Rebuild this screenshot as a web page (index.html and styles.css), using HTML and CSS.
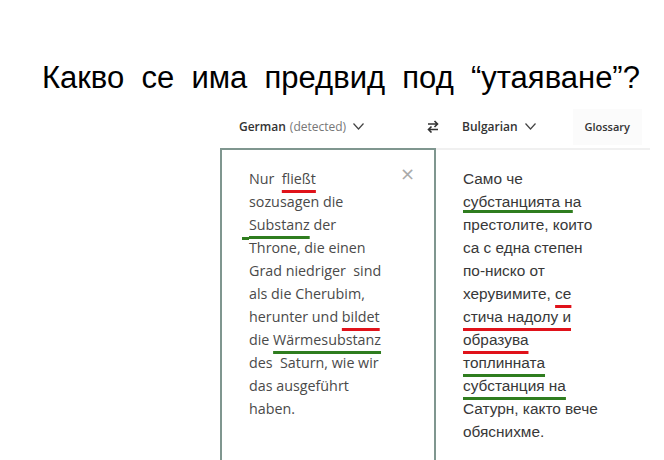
FILE: index.html
```html
<!DOCTYPE html>
<html lang="bg">
<head>
  <meta charset="UTF-8">
  <title>Утаяване</title>
  <link rel="stylesheet" href="styles.css">
</head>
<body>
<h1 class="title">Какво&nbsp; се&nbsp; има&nbsp; предвид&nbsp; под&nbsp; “утаяване”?</h1>

<div class="translator">
  <div class="toolbar">
    <div class="lang lang-from">
      <span class="lang-name">German</span> <span class="lang-note">(detected)</span>
      <svg class="chev" width="11" height="7" viewBox="0 0 11 7"><path d="M0.5 0.5 L5.5 6 L10.5 0.5" fill="none" stroke="#444" stroke-width="1.2"/></svg>
    </div>
    <svg class="swap" width="12" height="13" viewBox="0 0 12 13">
      <path d="M1 4 H10.5 M7.5 1 L10.5 4 L7.5 7" fill="none" stroke="#333" stroke-width="1.6"/>
      <path d="M11 9.5 H1.5 M4.5 6.5 L1.5 9.5 L4.5 12.5" fill="none" stroke="#333" stroke-width="1.6"/>
    </svg>
    <div class="lang lang-to">
      <span class="lang-name">Bulgarian</span>
      <svg class="chev" width="11" height="7" viewBox="0 0 11 7"><path d="M0.5 0.5 L5.5 6 L10.5 0.5" fill="none" stroke="#444" stroke-width="1.2"/></svg>
    </div>
    <button class="glossary">Glossary</button>
  </div>

  <div class="panels">
    <div class="panel panel-source">
      <p class="text-de">Nur&nbsp; <span class="mark red">fließt</span><br>
        sozusagen die<br>
        <span class="mark green m-left">Substanz</span> der<br>
        Throne, die einen<br>
        Grad niedriger&nbsp; sind<br>
        als die Cherubim,<br>
        herunter und <span class="mark red">bildet</span><br>
        die <span class="mark green">Wärmesubstanz</span><br>
        des&nbsp; Saturn, wie wir<br>
        das ausgeführt<br>
        haben.</p>
      <span class="close">×</span>
    </div>
    <div class="panel panel-target">
      <p class="text-bg">Само че<br>
        <span class="mark green m-up">субстанцията н</span>а<br>
        престолите, които<br>
        са с една степен<br>
        по-ниско от<br>
        херувимите, <span class="mark red">се</span><br>
        <span class="mark red">стича надолу и</span><br>
        <span class="mark red">образува</span><br>
        <span class="mark green">топлинната</span><br>
        <span class="mark green">субстанция на</span><br>
        Сатурн, както вече<br>
        обяснихме.</p>
    </div>
  </div>
</div>
</body>
</html>
```

FILE: styles.css
```css
body {
  margin: 0;
  background: #fff;
  font-family: "Liberation Sans", Arial, sans-serif;
  height: 460px;
  overflow: hidden;
}

.title {
  margin: 0;
  padding: 61px 0 0 42px;
  font-size: 31px;
  line-height: 34px;
  font-weight: normal;
  color: #000;
  white-space: nowrap;
}

.translator {
  margin-left: 220px;
  width: 430px;
  margin-top: 10px;
}

.toolbar {
  display: flex;
  align-items: center;
  height: 43px;
  font-family: "Open Sans", "Noto Sans", sans-serif;
  font-size: 12px;
  color: #333;
}

.lang {
  display: flex;
  align-items: center;
  gap: 4px;
}

.lang-from {
  padding-left: 19px;
  width: 188px;
}

.lang-name {
  font-weight: 600;
  color: #333;
}

.lang-note {
  color: #777;
}

.chev {
  margin-left: 3px;
}

.swap {
  margin-right: 23px;
}

.glossary {
  margin-left: auto;
  margin-right: 8px;
  height: 36px;
  padding: 0 12px;
  border: none;
  background: #fbfbfb;
  font-family: "Open Sans", "Noto Sans", sans-serif;
  font-size: 11px;
  font-weight: 600;
  color: #333;
}

.panels {
  display: grid;
  grid-template-columns: 216px 1fr;
  height: 320px;
}

.panel {
  position: relative;
}

.panel-source {
  border: 2px solid #7f968f;
  border-bottom: none;
}

.panel-target {
  border-top: 2px solid #f0f0f0;
}

.text-de, .text-bg {
  margin: 0;
  line-height: 23px;
}

.text-de {
  padding: 17px 0 0 27px;
  font-family: "Open Sans", "Noto Sans", sans-serif;
  font-size: 14.3px;
  color: #4a4a4a;
}

.text-bg {
  padding: 17px 0 0 27px;
  font-family: "Liberation Sans", Arial, sans-serif;
  font-size: 15.4px;
  color: #383838;
}

.close {
  position: absolute;
  top: 13px;
  right: 19px;
  font-family: "DejaVu Sans", sans-serif;
  font-size: 18px;
  color: #aaa;
}

.mark {
  text-decoration-line: underline;
  text-decoration-thickness: 3px;
  text-underline-offset: 6px;
  text-decoration-skip-ink: none;
}

.mark.red {
  text-decoration-color: #e0121a;
}

.mark.green {
  text-decoration-color: #2f7d1f;
}

.m-up {
  text-underline-offset: 3px;
}

/* marker line in the source starts a bit before the word */
.m-left {
  position: relative;
}

.m-left::before {
  content: "";
  position: absolute;
  left: -7px;
  width: 7px;
  bottom: -6px;
  height: 3px;
  background: #2f7d1f;
}
```
